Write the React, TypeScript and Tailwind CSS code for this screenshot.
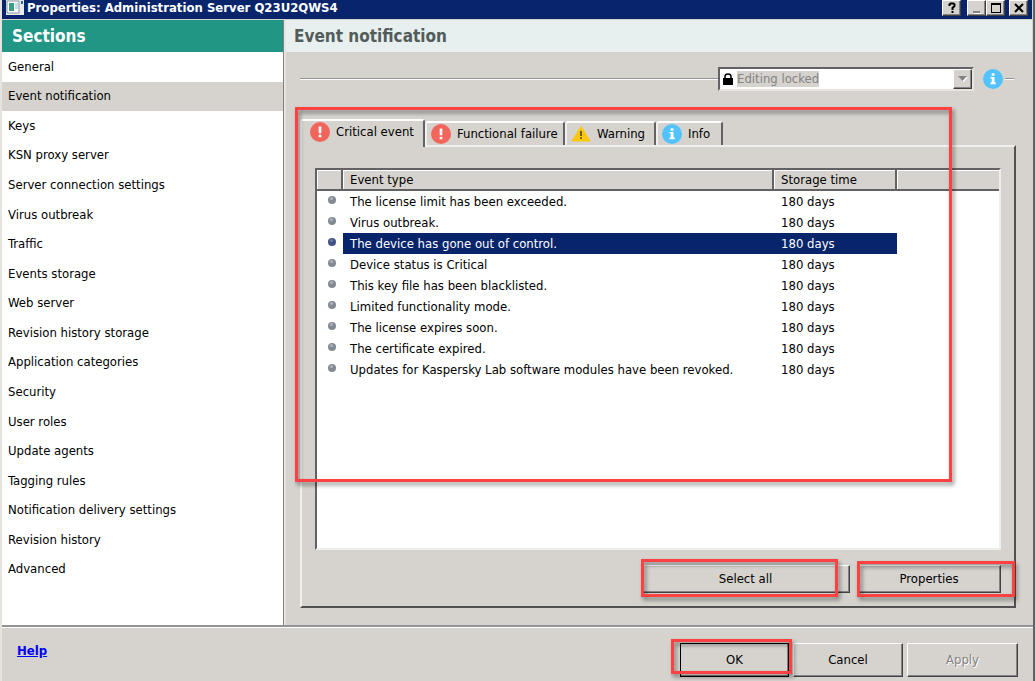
import { useState } from "react";
import type { ReactNode } from "react";
import clsx from "clsx";

const sections = [
  "General",
  "Event notification",
  "Keys",
  "KSN proxy server",
  "Server connection settings",
  "Virus outbreak",
  "Traffic",
  "Events storage",
  "Web server",
  "Revision history storage",
  "Application categories",
  "Security",
  "User roles",
  "Update agents",
  "Tagging rules",
  "Notification delivery settings",
  "Revision history",
  "Advanced",
];

const events = [
  "The license limit has been exceeded.",
  "Virus outbreak.",
  "The device has gone out of control.",
  "Device status is Critical",
  "This key file has been blacklisted.",
  "Limited functionality mode.",
  "The license expires soon.",
  "The certificate expired.",
  "Updates for Kaspersky Lab software modules have been revoked.",
];

const raised = "border border-t-white border-l-white border-r-[#424142] border-b-[#424142] shadow-[inset_-1px_-1px_0_#848284]";

function ErrorIcon() {
  return (
    <svg width="20" height="20" viewBox="0 0 20 20" className="shrink-0">
      <circle cx="10" cy="10" r="10" fill="#f1655c" />
      <path d="M8.7 4.5h2.6v6.8H8.7zM8.7 12.8h2.6v2.4H8.7z" fill="#fff" />
    </svg>
  );
}

function WarningIcon() {
  return (
    <svg width="20" height="18" viewBox="0 0 20 18" className="shrink-0">
      <path d="M10 1.5L19 16H1z" fill="#fcc80b" stroke="#fcc80b" strokeLinejoin="round" />
      <path d="M9.2 6h1.6v5H9.2zM9.2 12.3h1.6v1.8H9.2z" fill="#4b4223" />
    </svg>
  );
}

function InfoIcon() {
  return (
    <svg width="20" height="20" viewBox="0 0 20 20" className="shrink-0">
      <circle cx="10" cy="10" r="10" fill="#52c3ff" />
      <path d="M8.7 4.2h2.8v2.5H8.7zM7.5 8h4v5.6h1.3v1.7H7.4v-1.7h1.3V9.6H7.5z" fill="#fff" />
    </svg>
  );
}

const tabs = [
  { label: "Critical event", icon: <ErrorIcon />, width: "w-[125px]" },
  { label: "Functional failure", icon: <ErrorIcon />, width: "w-[140px]" },
  { label: "Warning", icon: <WarningIcon />, width: "w-[91px]" },
  { label: "Info", icon: <InfoIcon />, width: "w-[67px]" },
];

// red frame laid over a control or an area
function Highlight({ className }: { className: string }) {
  return (
    <div
      aria-hidden="true"
      className={clsx("absolute pointer-events-none border-3 border-[#ff4142] drop-shadow-[2px_3px_2px_rgba(0,0,0,0.45)]", className)}
    />
  );
}

function PushButton({ children, className, disabled }: { children: ReactNode; className?: string; disabled?: boolean }) {
  return (
    <button
      disabled={disabled}
      className={clsx("bg-[#d6d3ce] text-center", raised, disabled && "text-[#848284] [text-shadow:1px_1px_0_#fff]", className)}
    >
      {children}
    </button>
  );
}

function CaptionButton({ label, children }: { label: string; children: ReactNode }) {
  return (
    <button aria-label={label} className={clsx("w-[19px] h-4 flex items-center justify-center bg-[#d6d3ce]", raised)}>
      <svg width="14" height="14" viewBox="0 0 14 14" fill="none">{children}</svg>
    </button>
  );
}

export default function App() {
  const [section, setSection] = useState("Event notification");
  const [tab, setTab] = useState("Critical event");
  const [selected, setSelected] = useState(2);

  return (
    <div className="min-h-screen flex flex-col bg-[#d6d3ce] border-l-2 border-l-[#e7e3de] border-r-2 border-r-[#636163] text-black text-[13px] leading-4 font-['DejaVu_Sans_Condensed','DejaVu_Sans',sans-serif]">
      {/* Title bar */}
      <header className="h-[19px] mr-px flex items-start bg-[#08246b] text-white pl-1 pr-1">
        <svg width="18" height="15" viewBox="0 0 18 15" className="shrink-0 mr-[3px]">
          <path d="M0 0h18v15H0z" fill="#e8ebea" />
          <path d="M1 1h12v12H1z" fill="#fff" stroke="#8794a0" />
          <path d="M3 3h5v8H3z" fill="#3d9c83" />
          <path d="M9 3h3v6H9z" fill="#c6dce9" />
          <path d="M15 1h2v3h-2z" fill="#1f6da8" />
        </svg>
        <h1 className="flex-1 leading-4 font-bold whitespace-nowrap">Properties: Administration Server Q23U2QWS4</h1>
        <CaptionButton label="Help">
          <path d="M4.5 5V3.5L5.5 2.5h3L9.5 3.5V5L7.5 7v2M7.5 10v2" stroke="#000" strokeWidth="2" />
        </CaptionButton>
        <div className="flex ml-[6px] mr-1">
          <CaptionButton label="Minimize">
            <path d="M3 11h7" stroke="#848284" strokeWidth="2" />
            <path d="M4 12.5h7" stroke="#fff" />
          </CaptionButton>
          <CaptionButton label="Maximize">
            <path d="M2 2.5h10M2.5 2v10M11.5 2v10M2 11.5h10" stroke="#000" />
            <path d="M2 3h10" stroke="#000" strokeWidth="2" />
          </CaptionButton>
        </div>
        <CaptionButton label="Close">
          <path d="M3 3l8 8M11 3l-8 8" stroke="#000" strokeWidth="2" />
        </CaptionButton>
      </header>

      <div className="flex-1 flex pt-px mr-px">
        {/* Sections */}
        <nav className="w-[282px] shrink-0 flex flex-col bg-white border-r border-[#848284] pb-[41px]">
          <h2 className="h-8 pl-[10px] bg-[#219684] text-white text-[17px] leading-8 font-bold">Sections</h2>
          <ul className="flex-1 flex flex-col">
            {sections.map(s => (
              <li key={s} className="flex-1 flex">
                <button
                  onClick={() => setSection(s)}
                  className={clsx("w-full px-[6px] text-left", s === section && "bg-[#d6d3ce]")}
                >
                  {s}
                </button>
              </li>
            ))}
          </ul>
        </nav>

        <main className="flex-1 min-w-0 flex flex-col border-l-2 border-[#e7e3de]">
          <h2 className="h-8 pl-2 bg-[#e7efef] text-[#525d5a] text-[17px] leading-8 font-bold">{section}</h2>

          <div className="flex items-center pl-[14px] pr-[18px] pt-[15px]">
            <div className="flex-1 h-[2px] bg-[#949294] border-b border-white" />
            <div className="w-[256px] h-6 flex items-center bg-white border-2 border-t-[#636163] border-l-[#636163] border-r-[#e7e3de] border-b-[#e7e3de] pl-[3px]">
              <svg width="10" height="12" viewBox="0 0 10 12" className="mr-1">
                <path d="M0 5h10v7H0z" fill="#000" />
                <path d="M2 6V3.5Q2 1 5 1T8 3.5V6" fill="none" stroke="#000" strokeWidth="1.5" />
              </svg>
              <select aria-label="Editing lock" disabled className="appearance-none w-[82px] h-4 bg-[#d6d3ce] text-[#848284]">
                <option>Editing locked</option>
              </select>
              <span className={clsx("ml-auto w-[19px] h-5 flex items-center justify-center bg-[#d6d3ce]", raised)}>
                <svg width="10" height="6" viewBox="0 0 10 6">
                  <path d="M1 1h9L5.500 6z" fill="#fff" />
                  <path d="M0 0h9L4.500 5z" fill="#848284" />
                </svg>
              </span>
            </div>
            <div className="w-[9px]" />
            <InfoIcon />
            <div className="ml-[2px] w-[9px] h-[2px] bg-[#949294] border-b border-white" />
          </div>

          <div className="relative flex-1 flex flex-col pl-[14px] pr-4 pt-7 pb-[17px]">
            {/* Tabs */}
            <div role="tablist" className="relative z-10 flex items-end -mb-[2px]">
              {tabs.map(t => (
                <button
                  key={t.label}
                  role="tab"
                  aria-selected={t.label === tab}
                  onClick={() => setTab(t.label)}
                  className={clsx(
                    "flex items-center gap-[6px] whitespace-nowrap rounded-t-[3px] border-t-2 border-l-2 border-r-2 border-t-white border-l-[#efefef] border-r-[#636163] bg-[#d6d3ce]",
                    t.width,
                    t.label === tab ? "h-7 pb-1 pl-2" : "h-6 mb-[2px] pl-1"
                  )}
                >
                  {t.icon}
                  {t.label}
                </button>
              ))}
            </div>

            <div className="flex-1 flex flex-col border-2 border-t-[#efefef] border-l-[#efefef] border-r-[#525152] border-b-[#525152] pt-[21px] px-[13px] pb-[13px]">
              <div className="flex-1 bg-white border-2 border-t-[#636163] border-l-[#636163] border-r-[#efefef] border-b-[#efefef]">
                <table className="w-full table-fixed border-separate border-spacing-0">
                  <colgroup>
                    <col className="w-[26px]" />
                    <col className="w-[431px]" />
                    <col className="w-[123px]" />
                    <col />
                  </colgroup>
                  <thead>
                    <tr className="text-left bg-[#d6d3ce]">
                      {["", "Event type", "Storage time", ""].map((h, i) => (
                        <th
                          key={i}
                          className={clsx(
                            "h-[21px] p-0 pl-[7px] font-normal border-b-2 border-b-[#636163] shadow-[inset_1px_1px_0_#fff]",
                            i < 3 && "border-r-2 border-r-[#636163]"
                          )}
                        >
                          {h}
                        </th>
                      ))}
                    </tr>
                  </thead>
                  <tbody>
                    {events.map((e, i) => (
                      <tr key={e} className="h-[21px]" onClick={() => setSelected(i)}>
                        <td className="p-0 pl-1">
                          <svg width="8" height="8" viewBox="0 0 8 8" className="mx-auto mb-1">
                            <circle cx="4" cy="4" r="4" fill={i === selected ? "#425384" : "#848a94"} />
                            <circle cx="3.500" cy="2.500" r="1.500" fill={i === selected ? "#6b7dab" : "#b0b5bb"} />
                          </svg>
                        </td>
                        <td className={clsx("p-0 pl-[7px] whitespace-nowrap", i === selected && "bg-[#08246b] text-white")}>{e}</td>
                        <td className={clsx("p-0 pl-[7px]", i === selected && "bg-[#08246b] text-white")}>180 days</td>
                        <td />
                      </tr>
                    ))}
                  </tbody>
                </table>
              </div>

              <div className="flex justify-end gap-[7px] mt-[15px]">
                <div className="relative flex">
                  <PushButton className="w-[209px] h-7">Select all</PushButton>
                  <Highlight className="left-0 right-3 -top-[6px] -bottom-1" />
                </div>
                <div className="relative flex">
                  <PushButton className="w-36 h-7">Properties</PushButton>
                  <Highlight className="left-0 -right-[14px] -top-1 -bottom-1" />
                </div>
              </div>
            </div>
            <Highlight className="left-[9px] right-20 top-4 h-[375px] z-20" />
          </div>
        </main>
      </div>

      {/* Bottom buttons */}
      <footer className="flex items-start justify-between border-t-2 border-[#949294] shadow-[inset_0_1px_0_#fff] pt-4 pb-1 pl-[15px] pr-[15px]">
        <a href="#help" className="text-[#0000ff] underline font-bold">Help</a>
        <div className="flex gap-1">
          <div className="relative flex">
            <PushButton className="w-[109px] h-[34px] outline outline-black -outline-offset-1">OK</PushButton>
            <Highlight className="-left-[9px] -right-[3px] -top-1 bottom-[3px]" />
          </div>
          <PushButton className="w-[110px] h-[34px]">Cancel</PushButton>
          <PushButton className="w-[111px] h-[34px]" disabled>Apply</PushButton>
        </div>
      </footer>
    </div>
  );
}
